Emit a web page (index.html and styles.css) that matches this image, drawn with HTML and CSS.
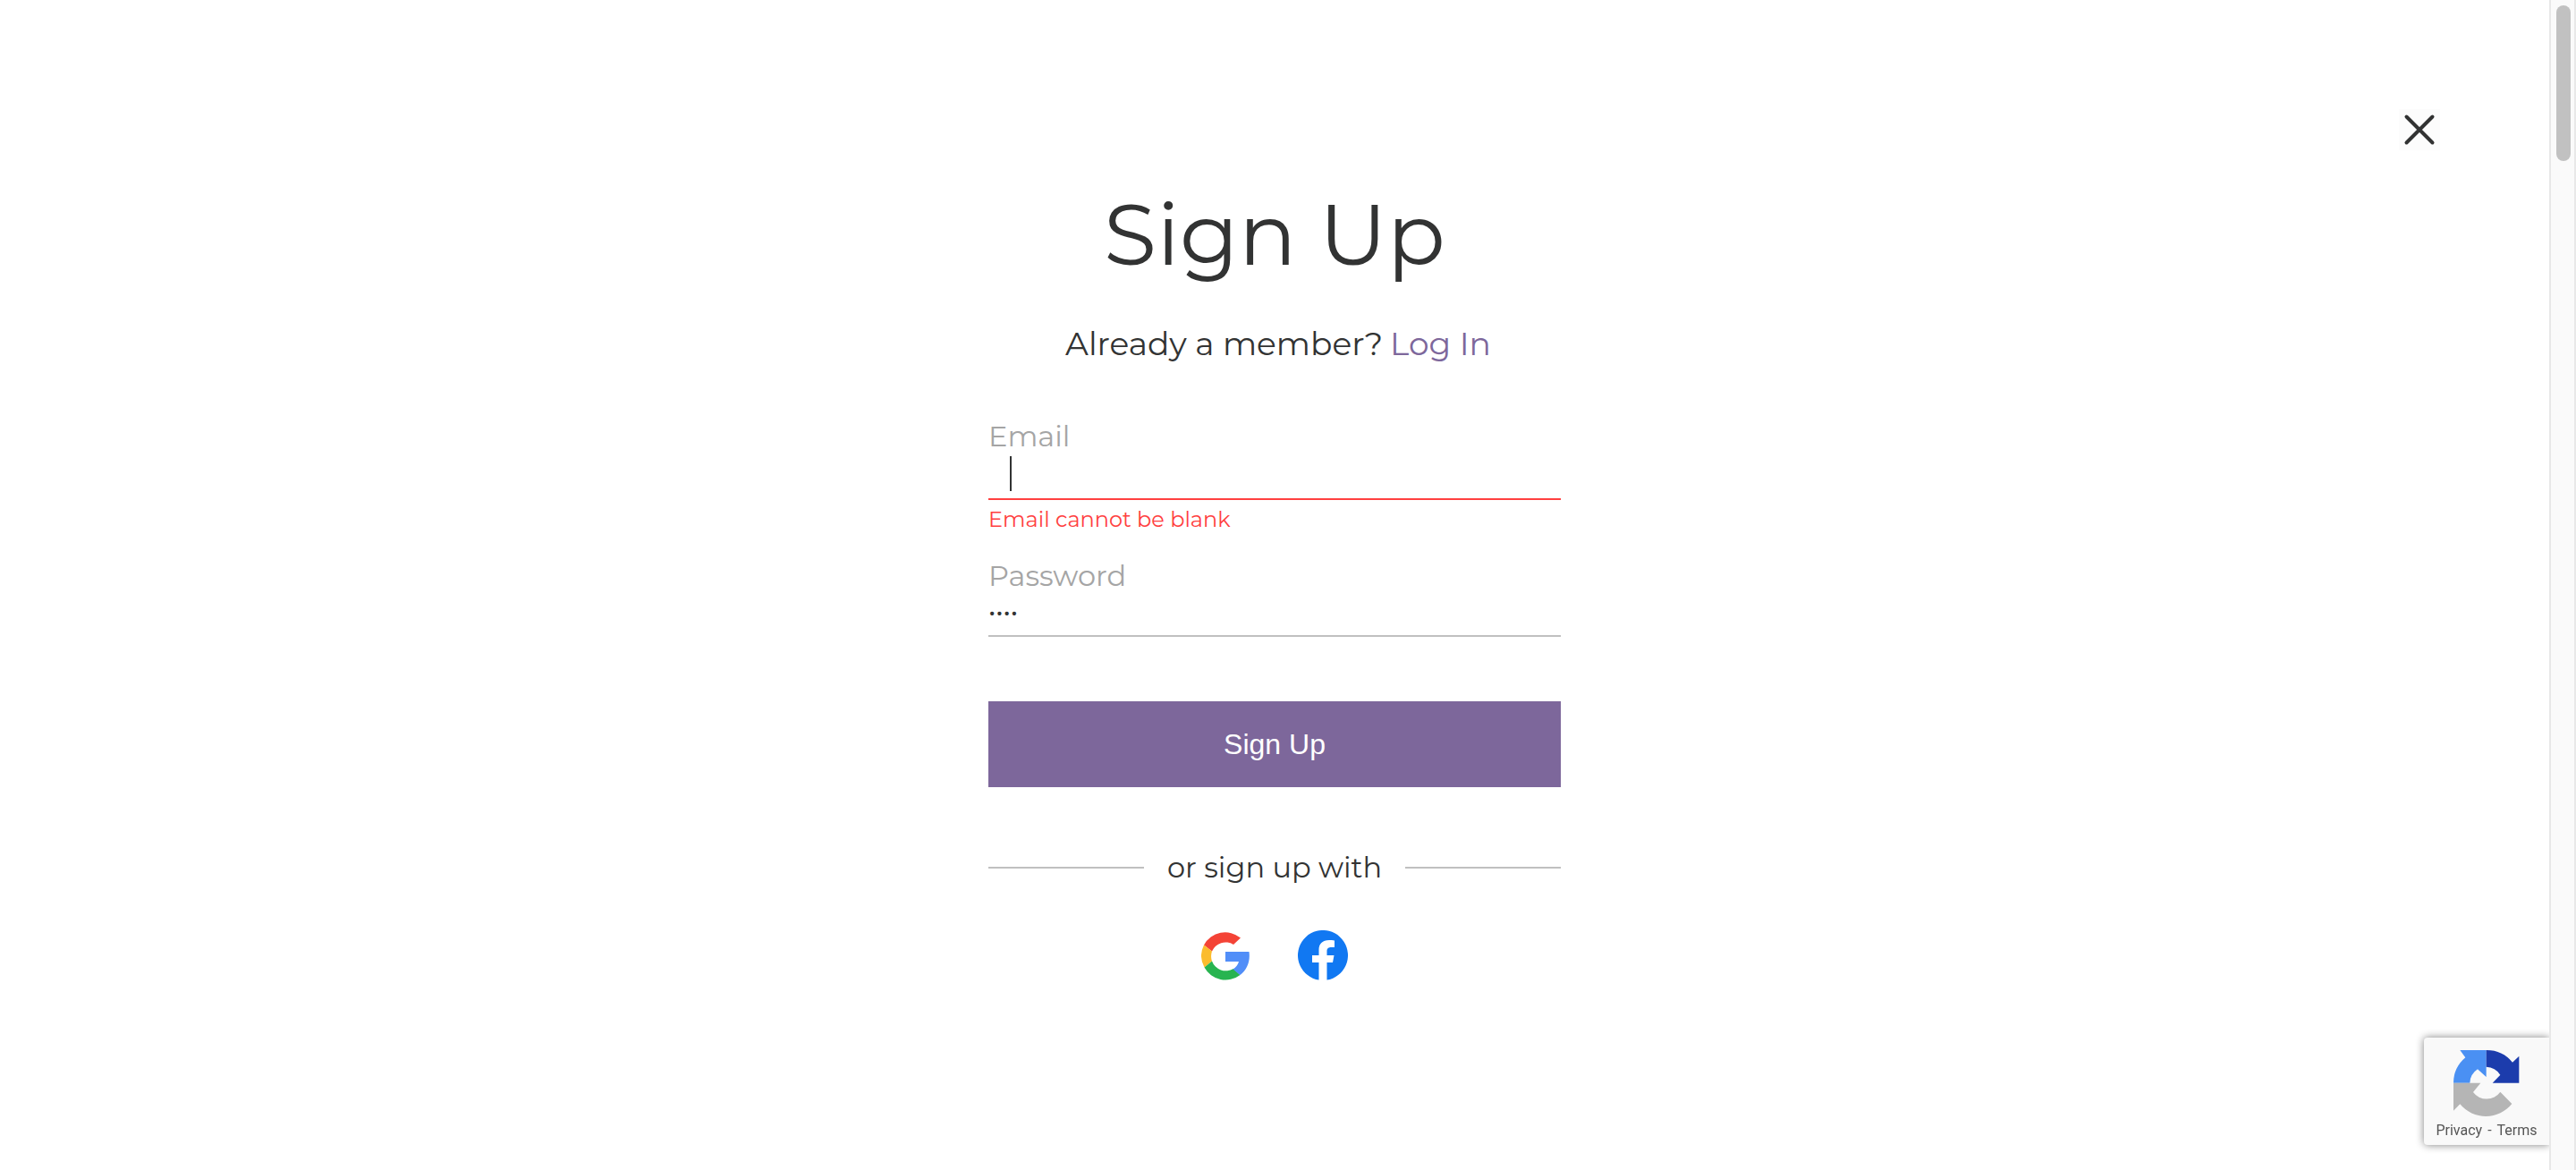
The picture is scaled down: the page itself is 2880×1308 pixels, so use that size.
FILE: index.html
```html
<!DOCTYPE html>
<html lang="en">
<head>
<meta charset="utf-8">
<meta name="viewport" content="width=device-width, initial-scale=1">
<title>Sign Up</title>
<link rel="stylesheet" href="styles.css">
</head>
<body>
<div class="page">
  <main class="dialog">
    <header class="dialog-bar">
      <button class="close" type="button" aria-label="Close">
        <svg viewBox="0 0 46 46" width="46" height="46" fill="none" stroke="#323333" stroke-width="4" stroke-linecap="round"><path d="M8.500 8.500 37.500 37.500M37.500 8.500 8.500 37.500"/></svg>
      </button>
    </header>
    <section class="signup">
      <h1 class="title">Sign Up</h1>
      <p class="switch"><span>Already a member?</span> <a class="switch-link" href="#login">Log In</a></p>
      <form class="form">
        <div class="field field-invalid">
          <label class="label" for="email">Email</label>
          <input class="input input-email" id="email" type="email" aria-describedby="email-error">
          <p class="error" id="email-error">Email cannot be blank</p>
        </div>
        <div class="field">
          <label class="label" for="password">Password</label>
          <input class="input input-password" id="password" type="password" value="abcd">
        </div>
        <button class="submit" type="submit">Sign Up</button>
      </form>
      <div class="divider"><span class="divider-text">or sign up with</span></div>
      <div class="social">
        <button class="social-button" type="button" aria-label="Sign up with Google">
          <svg viewBox="0 0 54 54" width="54" height="54">
            <path fill="#f44336" d="M3 14.500A27 27 0 0 1 44 6.500L36 14A16.500 16.500 0 0 0 12 21.500Z"/>
            <path fill="#fbbc2d" d="M3 14.500 12 21.500A17 17 0 0 0 12 32.500L3.500 39.500A27 27 0 0 1 3 14.500Z"/>
            <path fill="#28b450" d="M3.500 39.500 12 32.500A16.500 16.500 0 0 0 36 41L43.500 48A27 27 0 0 1 3.500 39.500Z"/>
            <path fill="#518ef8" d="M27 22H53.500C55 32 51.500 42 43.500 48L35.500 41.500C39 39.500 41 36.500 42 33H27Z"/>
          </svg>
        </button>
        <button class="social-button" type="button" aria-label="Sign up with Facebook">
          <svg viewBox="0 0 56 56" width="56" height="56">
            <path fill="#1178f2" d="M23.500 55.600A28 28 0 1 1 32.500 55.600V36H39L40.500 28H32.500V23.500C32.500 20 34.500 19 37.500 19H41V11.500C39 11 37 11 35 11C27.500 11 23.500 15 23.500 22V28H16V36H23.500Z"/>
          </svg>
        </button>
      </div>
    </section>
  </main>
  <aside class="recaptcha">
    <svg viewBox="0 0 222 226" width="74" height="76">
      <path fill="#4a90f3" d="M22 2H110V92L81 66A58 58 0 0 0 55 112H0A112 112 0 0 1 40 27Z"/>
      <path fill="#1c3cac" d="M110 2A112 112 0 0 1 198 43L220 22V112H131L157 85A58 58 0 0 0 110 58Z"/>
      <path fill="#b5b5b5" d="M0 112H91L66 143A56 56 0 0 0 157 142L196 182A112 112 0 0 1 22 183L0 205Z"/>
    </svg>
    <p class="recaptcha-links"><a href="#privacy">Privacy</a><span>-</span><a href="#terms">Terms</a></p>
  </aside>
  <div class="scrollbar"><div class="scrollbar-thumb"></div></div>
</div>
</body>
</html>
```
FILE: styles.css
```css
* {
  box-sizing: border-box;
}

body {
  margin: 0;
  background: #fff;
  color: #323333;
  font-family: Montserrat, Inter, "Liberation Sans", sans-serif;
  font-weight: 400;
}

h1,
p {
  margin: 0;
}

button {
  padding: 0;
  border: 0;
  cursor: pointer;
}

svg {
  display: block;
}

.page {
  display: grid;
  grid-template-columns: 1fr 30px;
  min-height: 100vh;
}

.dialog {
  padding: 122px 122px 120px;
}

.dialog-bar {
  display: flex;
  justify-content: flex-end;
}

.close {
  background: #fcfcfc;
}

.signup {
  display: flex;
  flex-direction: column;
  width: 640px;
  max-width: 100%;
  margin: 0 auto;
  padding-top: 34px;
}

.title {
  font-size: 96px;
  line-height: 120px;
  font-weight: 400;
  text-align: center;
}

.switch {
  display: flex;
  justify-content: center;
  gap: 8px;
  padding: 40px 0 0 8px;
  font-size: 36px;
  line-height: 44px;
}

.switch-link {
  color: #7d679b;
  text-decoration: none;
}

.form {
  display: flex;
  flex-direction: column;
  padding-top: 62px;
}

.field {
  display: flex;
  flex-direction: column;
  height: 156px;
}

.label {
  color: #a5a5a5;
  font-size: 32px;
  line-height: 40px;
}

.input {
  width: 100%;
  height: 51px;
  padding: 0 0 8px;
  border: 0;
  border-bottom: 2px solid #c0c0c0;
  border-radius: 0;
  outline: 0;
  background: none;
  color: #323333;
  font: inherit;
  font-size: 28px;
}

.input-email {
  padding-left: 24px;
  background: linear-gradient(#323333, #323333) 24px 2px / 2px 39px no-repeat;
}

.input-password {
  height: 48px;
  padding-bottom: 6px;
}

.field-invalid .input {
  border-bottom-color: #ff4040;
}

.error {
  padding-top: 6px;
  color: #ff4040;
  font-size: 24px;
  line-height: 32px;
}

.submit {
  height: 96px;
  margin-top: 4px;
  background: #7d679b;
  color: #fff;
  font-family: "Liberation Sans", Arial, sans-serif;
  font-size: 32px;
}

.divider {
  display: flex;
  align-items: center;
  gap: 26px;
  padding-top: 70px;
}

.divider::before,
.divider::after {
  content: "";
  flex: 1;
  height: 2px;
  background: #c0c0c0;
}

.divider-text {
  font-size: 32px;
  line-height: 40px;
}

.social {
  display: flex;
  justify-content: center;
  align-items: flex-end;
  gap: 54px;
  padding-top: 50px;
}

.social-button {
  background: none;
}

.recaptcha {
  position: fixed;
  right: 30px;
  bottom: 28px;
  display: flex;
  flex-direction: column;
  align-items: center;
  width: 140px;
  height: 120px;
  padding-top: 13px;
  border-radius: 4px 0 0 4px;
  background: #f9f9f9;
  box-shadow: 0 0 10px #808080;
  clip-path: inset(-20px 0 -20px -20px);
}

.recaptcha-links {
  display: flex;
  gap: 6px;
  padding-top: 5px;
  color: #555;
  font-family: Roboto, sans-serif;
  font-size: 16px;
  font-weight: 400;
  line-height: 20px;
}

.recaptcha-links a {
  color: inherit;
  text-decoration: none;
}

.scrollbar {
  padding: 6px 4px 0 6px;
  border: solid #e8e8e8;
  border-width: 0 2px;
  background: #fafafa;
}

.scrollbar-thumb {
  width: 16px;
  height: 174px;
  border-radius: 8px;
  background: #c1c1c1;
}
```
